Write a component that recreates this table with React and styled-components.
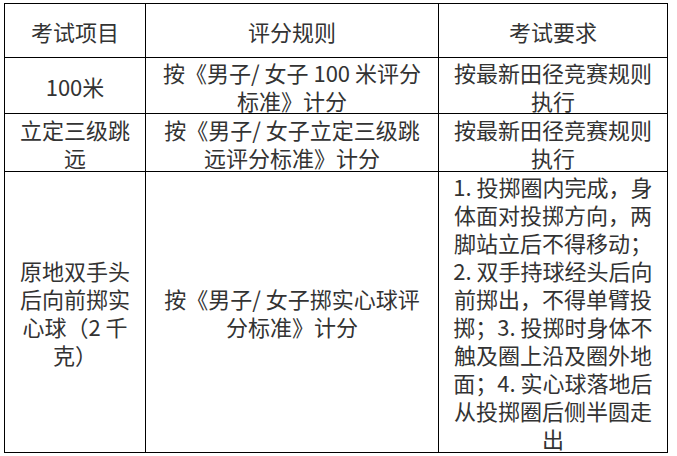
import React from "react";
import styled, { createGlobalStyle } from "styled-components";

const Global = createGlobalStyle`
  html, body {
    margin: 0;
    padding: 0;
    background: #ffffff;
  }
  body {
    font-family: "Noto Sans CJK SC", "Noto Sans", sans-serif;
  }
`;

const Page = styled.div`
  padding: 3px 0 0 4px;
`;

const Table = styled.div`
  display: grid;
  grid-template-columns: 141px 293px 229px;
  grid-template-rows: 54px 56px 58px 281px;
  width: max-content;
  border-left: 1px solid #000;
  border-top: 1px solid #000;
`;

const Cell = styled.div`
  box-sizing: border-box;
  border-right: 1px solid #000;
  border-bottom: 1px solid #000;
  display: flex;
  align-items: center;
  justify-content: center;
  text-align: center;
  padding: 0 ${(p) => p.$pad}px;
  font-size: 22px;
  line-height: 28px;
  color: #333333;
  word-break: normal;
  line-break: strict;
`;

const pads = [5, 12, 7];

const rows = [
  ["考试项目", "评分规则", "考试要求"],
  ["100米", "按《男子/ 女子 100 米评分标准》计分", "按最新田径竞赛规则执行"],
  ["立定三级跳远", "按《男子/ 女子立定三级跳远评分标准》计分", "按最新田径竞赛规则执行"],
  [
    "原地双手头后向前掷实心球（2 千克）",
    "按《男子/ 女子掷实心球评分标准》计分",
    "1. 投掷圈内完成，身体面对投掷方向，两脚站立后不得移动；2. 双手持球经头后向前掷出，不得单臂投掷；3. 投掷时身体不触及圈上沿及圈外地面；4. 实心球落地后从投掷圈后侧半圆走出",
  ],
];

export default function App() {
  return (
    <>
      <Global />
      <Page>
        <Table>
          {rows.map((r, i) =>
            r.map((c, j) => (
              <Cell key={`${i}-${j}`} $pad={pads[j]}>
                <span>{c}</span>
              </Cell>
            ))
          )}
        </Table>
      </Page>
    </>
  );
}
